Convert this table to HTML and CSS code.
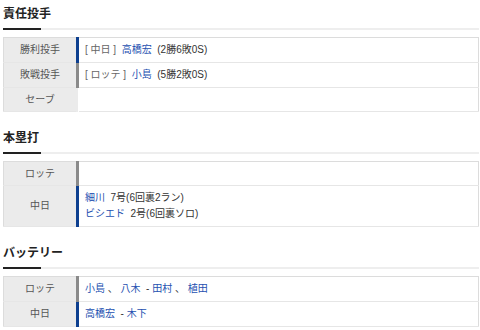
FILE: index.html
```html
<!DOCTYPE html>
<html lang="ja">
<head>
    <meta charset="UTF-8">
    <meta name="viewport" content="width=device-width, initial-scale=1.0">
    <title>試合結果</title>
    <link rel="stylesheet" href="styles.css">
</head>
<body>

    <div class="container">

        <!-- 責任投手 -->
        <section class="block">
            <h2 class="block-title">責任投手</h2>
            <table class="score-table">
                <tr>
                    <th>勝利投手</th>
                    <td class="team-d"><span class="team">[ 中日 ]</span>&nbsp; <a href="#">高橋宏</a>&nbsp; (2勝6敗0S)</td>
                </tr>
                <tr>
                    <th>敗戦投手</th>
                    <td class="team-m"><span class="team">[ ロッテ ]</span>&nbsp; <a href="#">小島</a>&nbsp; (5勝2敗0S)</td>
                </tr>
                <tr class="short">
                    <th>セーブ</th>
                    <td></td>
                </tr>
            </table>
        </section>

        <!-- 本塁打 -->
        <section class="block">
            <h2 class="block-title">本塁打</h2>
            <table class="score-table">
                <tr class="short">
                    <th>ロッテ</th>
                    <td class="team-m"></td>
                </tr>
                <tr>
                    <th>中日</th>
                    <td class="team-d">
                        <a href="#">細川</a>&nbsp; 7号(6回裏2ラン)<br>
                        <a href="#">ビシエド</a>&nbsp; 2号(6回裏ソロ)
                    </td>
                </tr>
            </table>
        </section>

        <!-- バッテリー -->
        <section class="block">
            <h2 class="block-title">バッテリー</h2>
            <table class="score-table">
                <tr>
                    <th>ロッテ</th>
                    <td class="team-m"><a href="#">小島</a> 、 <a href="#">八木</a>&nbsp; - <a href="#">田村</a> 、 <a href="#">植田</a></td>
                </tr>
                <tr>
                    <th>中日</th>
                    <td class="team-d"><a href="#">高橋宏</a>&nbsp; - <a href="#">木下</a></td>
                </tr>
            </table>
        </section>

    </div>

</body>
</html>
```

FILE: styles.css
```css
body {
    font-family: "Liberation Sans", "Noto Sans CJK JP", sans-serif;
    margin: 0;
    padding: 0;
    background-color: #fff;
    color: #333;
}
.container {
    margin: 0 1px 0 3px;
    padding-top: 5px;
}
.block + .block {
    margin-top: 17px;
}
.block-title {
    margin: 0;
    padding: 0 0 7px;
    font-size: 12px;
    line-height: 18px;
    font-weight: bold;
    color: #222;
    /* short dark bar sitting on a long light rule */
    background:
        linear-gradient(#222, #222) left bottom / 38px 2px no-repeat,
        linear-gradient(#eee, #eee) left bottom / 100% 2px no-repeat;
}
.score-table {
    width: 100%;
    margin-top: 7px;
    border-collapse: collapse;
    border: 1px solid #dcdcdc;
    font-size: 10px;
}
.score-table th {
    width: 72px;
    padding: 4px 0;
    line-height: 16px;
    font-weight: normal;
    color: #555;
    background-color: #ebebeb;
    text-align: center;
    border-bottom: 1px solid #e6e6e6;
}
.score-table td {
    padding: 4px 6px;
    line-height: 16px;
    border-bottom: 1px solid #e6e6e6;
    border-left: 3px solid transparent;
    color: #333;
}
.score-table .short th,
.score-table .short td {
    line-height: 15px;
}
.score-table td.team-d {
    border-left-color: #0d3f8f;
}
.score-table td.team-m {
    border-left-color: #8a8a8a;
}
.score-table .team {
    color: #666;
}
.score-table a {
    color: #2450b0;
    text-decoration: none;
}
```
